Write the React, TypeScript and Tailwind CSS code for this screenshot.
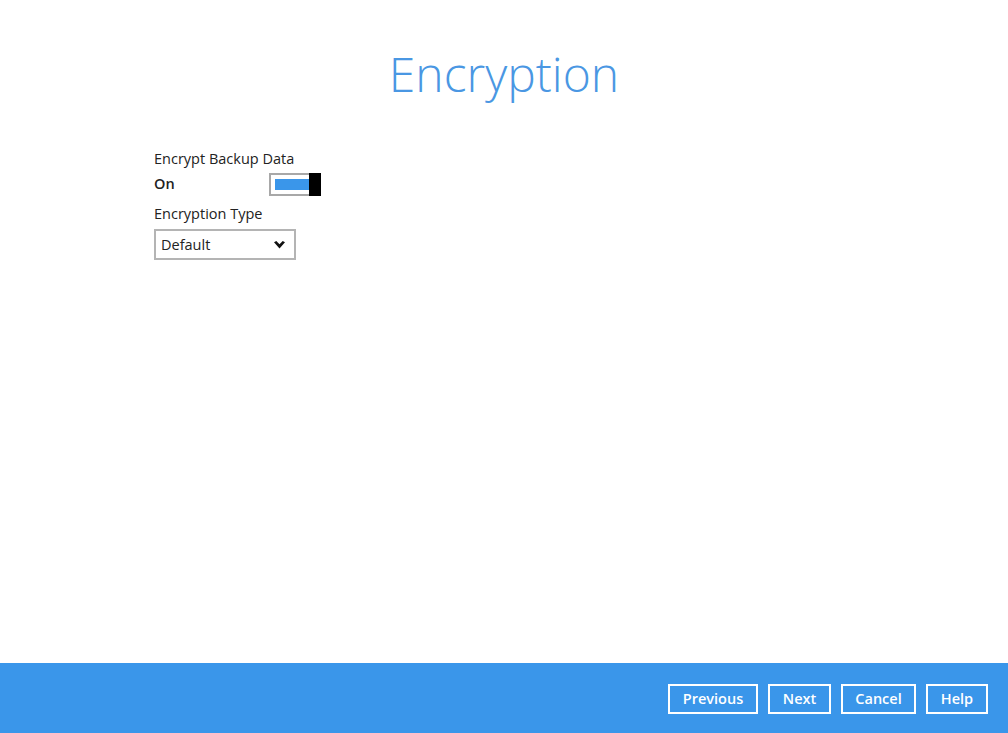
import React from 'react';

const font = { fontFamily: '"Open Sans", "Noto Sans", sans-serif' };

const FooterButton: React.FC<{ label: string; width: string }> = ({ label, width }) => (
  <button
    className={`h-[30px] ${width} border-2 border-white text-white text-[14.5px] font-semibold flex items-center justify-center`}
  >
    {label}
  </button>
);

export default function App() {
  return (
    <div className="w-[1008px] h-[733px] bg-white flex flex-col text-[#222]" style={font}>
      <div className="flex-1 flex flex-col">
        <h1 className="text-center text-[48px] font-light text-[#4a97e3] leading-none pt-[50px]">
          Encryption
        </h1>
        <div className="pl-[154px] pt-[51px] flex flex-col">
          <div className="text-[14.5px] leading-[20px]">Encrypt Backup Data</div>
          <div className="flex items-center h-[26px] mt-[2px]">
            <span className="text-[14.5px] font-semibold w-[115px]">On</span>
            <div className="w-[52px] h-[23px] border-2 border-[#a8a8a8] flex items-stretch">
              <div className="flex-1 py-[4px] pl-[4px]">
                <div className="h-full bg-[#3a96ea]" />
              </div>
              <div className="w-[12px] bg-black -my-[2px] -mr-[2px]" />
            </div>
          </div>
          <div className="text-[14.5px] leading-[20px] mt-[7px]">Encryption Type</div>
          <div className="mt-[5px] w-[142px] h-[31px] border-2 border-[#b4b4b4] flex items-center justify-between pl-[5px] pr-[9px]">
            <span className="text-[14.5px]">Default</span>
            <svg width="11" height="8" viewBox="0 0 11 8">
              <path d="M0 1.2 L2.3 0 L5.5 3.2 L8.7 0 L11 1.2 L5.5 7.5 Z" fill="#111" />
            </svg>
          </div>
        </div>
      </div>
      <div className="h-[70px] bg-[#3a96ea] flex items-center justify-end gap-[10px] pr-[20px] pt-[1px]">
        <FooterButton label="Previous" width="w-[90px]" />
        <FooterButton label="Next" width="w-[63px]" />
        <FooterButton label="Cancel" width="w-[75px]" />
        <FooterButton label="Help" width="w-[62px]" />
      </div>
    </div>
  );
}
